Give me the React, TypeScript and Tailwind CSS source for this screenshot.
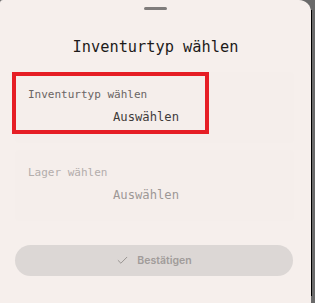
import { Check } from "lucide-react";

const mono = { fontFamily: '"DejaVu Sans Mono", "Liberation Mono", monospace' };

const Field = ({
  label,
  value,
  disabled,
  highlight,
}: {
  label: string;
  value: string;
  disabled?: boolean;
  highlight?: boolean;
}) => {
  return (
    <div className="relative rounded-[4px] bg-[#f5eeeb] pt-[15px] pb-[16px] pl-[13px]">
      <div
        className={`text-[11px] leading-[16px] ${disabled ? "text-[#b3adab]" : "text-[#6a6564]"}`}
        style={mono}
      >
        {label}
      </div>
      <div
        className={`mt-[4px] pl-[85px] text-[12.2px] leading-[20px] ${disabled ? "text-[#9d9896]" : "text-[#3f3b3a]"}`}
        style={mono}
      >
        {value}
      </div>
      {highlight && (
        <div className="absolute left-[-3px] top-0 h-[62px] w-[197px] border-[4px] border-[#e61e25]" />
      )}
    </div>
  );
};

const App = () => {
  return (
    <div className="flex h-[303px] w-[315px] overflow-hidden bg-[#6a6a6a]">
      <div className="flex h-full w-[311px] flex-col rounded-tl-[3px] rounded-tr-[12px] bg-[#f6efec] px-[15px]">
        <div className="mx-auto mt-[7px] h-[3px] w-[23px] rounded-full bg-[#7f7c7b]" />
        <h1
          className="mt-[25px] text-center text-[15.3px] leading-[24px] text-[#1d1b1a]"
          style={mono}
        >
          Inventurtyp wählen
        </h1>
        <div className="mt-[13px] flex w-[279px] flex-col gap-[7px]">
          <Field label="Inventurtyp wählen" value="Auswählen" highlight />
          <Field label="Lager wählen" value="Auswählen" disabled />
        </div>
        <button
          className="mt-[24px] flex h-[31px] w-[278px] items-center justify-center gap-[8px] rounded-full bg-[#dcd7d5] text-[10.5px] font-semibold text-[#a19c9a]"
          style={{ fontFamily: "Inter, Roboto, sans-serif" }}
        >
          <Check size={13} strokeWidth={1.6} className="text-[#8f8a88]" />
          Bestätigen
        </button>
      </div>
      <div className="flex flex-col">
        <div className="mt-[10px] h-[286px] w-[1px] bg-black" />
      </div>
      <div className="flex-1 bg-[#6a6a6a]" />
    </div>
  );
};

export default App;
